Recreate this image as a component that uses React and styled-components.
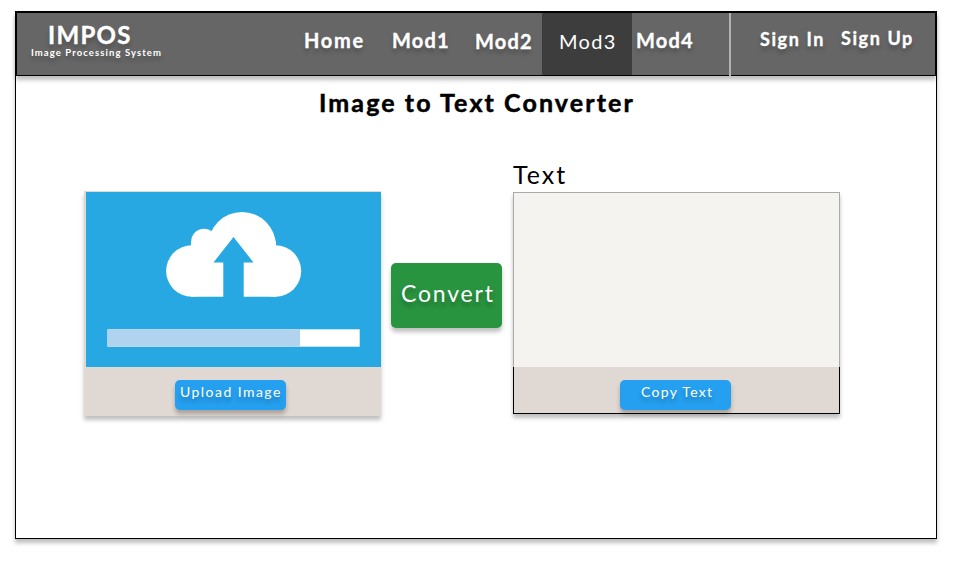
import React from "react";
import styled, { createGlobalStyle } from "styled-components";

const GlobalStyle = createGlobalStyle`
  * { box-sizing: border-box; }
  body { margin: 0; background: #fff; font-family: Lato, "Noto Sans", sans-serif; }
  h1, h2, p { margin: 0; }
`;

const raised = "0 4px 4px rgba(0, 0, 0, 0.25)";

const Page = styled.div`
  height: 581px;
  padding: 11px 0 0 15px;
`;

const Frame = styled.div`
  width: 922px;
  height: 528px;
  border: 1px solid #000;
  box-shadow: ${raised};
  display: flex;
  flex-direction: column;
`;

const Header = styled.header`
  flex: none;
  height: 64px;
  display: flex;
  background: #666;
  border: 1px solid #000;
  box-shadow: ${raised};
  color: #fff;
`;

const Brand = styled.div`
  width: 271px;
  padding-left: 14px;
  white-space: nowrap;
  text-shadow: ${raised};
  font-weight: 700;
`;

const BrandName = styled.div`
  padding: 8px 0 0 17px;
  font-size: 24px;
  line-height: 27px;
  letter-spacing: 1.3px;
  -webkit-text-stroke: 0.4px #fff;
`;

const Tagline = styled.div`
  font-size: 9.5px;
  line-height: 9px;
  padding-top: 0;
  letter-spacing: 1.08px;
`;

const NavItem = styled.a`
  width: ${(p) => p.$width}px;
  padding: ${(p) => p.$top}px 0 0 ${(p) => p.$left}px;
  font-size: ${(p) => p.$size || 20}px;
  line-height: 28px;
  font-weight: ${(p) => (p.$active ? 400 : 700)};
  letter-spacing: ${(p) => p.$spacing}px;
  background: ${(p) => (p.$active ? "#3d3d3d" : "transparent")};
  text-shadow: ${(p) => (p.$active ? "none" : raised)};
  -webkit-text-stroke: ${(p) => (p.$active ? 0 : 0.35)}px #fff;
  white-space: nowrap;
`;

const Divider = styled.div`
  width: 2px;
  height: 63px;
  background: #b3b3b3;
`;

const Title = styled.h1`
  margin: 9px 0 0 303px;
  font-size: 25px;
  line-height: 34px;
  letter-spacing: 2.1px;
  -webkit-text-stroke: 0.5px #000;
  white-space: nowrap;
`;

const Workspace = styled.main`
  display: flex;
  align-items: flex-start;
  padding: 41px 0 0 68px;
`;

const UploadPanel = styled.section`
  width: 297px;
  height: 225px;
  margin-top: 31px;
  padding: 1px 0 0 2px;
  background: #e0d8d2;
  box-shadow: ${raised};
  display: flex;
  flex-direction: column;
`;

const CloudArt = styled.svg`
  display: block;
  flex: none;
  width: 295px;
  height: 175px;
`;

const PanelFooter = styled.div`
  flex: 1;
  display: flex;
  align-items: flex-start;
  padding: 13px 0 0 ${(p) => p.$left}px;
  background: #e0d8d2;
  border: ${(p) => (p.$outlined ? "1px solid #000" : "none")};
  border-top: none;
`;

const Button = styled.button`
  width: 111px;
  height: 30px;
  padding: 0 0 7px ${(p) => p.$inset}px;
  border: none;
  border-radius: 5px;
  background: #259fef;
  box-shadow: ${raised};
  color: #fff;
  font: 400 14px/23px Lato, "Noto Sans", sans-serif;
  letter-spacing: ${(p) => p.$spacing}px;
  text-align: left;
  text-shadow: ${raised};
  white-space: nowrap;
`;

const ConvertButton = styled(Button)`
  height: 65px;
  margin: 103px 11px 0 10px;
  padding: 0 0 5px 10px;
  background: #28943f;
  font-size: 23px;
  line-height: 60px;
`;

const TextColumn = styled.section`
  width: 327px;
`;

const TextLabel = styled.h2`
  height: 32px;
  font-size: 25px;
  line-height: 28px;
  font-weight: 400;
  letter-spacing: 2px;
`;

const TextPanel = styled.div`
  height: 222px;
  display: flex;
  flex-direction: column;
  box-shadow: ${raised};
`;

const Output = styled.div`
  height: 175px;
  background: #f4f3ef;
  border: 1px solid #aaa;
  border-bottom: none;
`;

const navItems = [
  { label: "Home", $width: 90, $left: 16, $top: 13, $spacing: 1.7 },
  { label: "Mod1", $width: 84, $left: 14, $top: 13, $spacing: 1.2 },
  { label: "Mod2", $width: 80, $left: 13, $top: 14, $spacing: 1.2 },
  { label: "Mod3", $width: 90, $left: 17, $top: 14, $spacing: 1.3, $active: true },
  { label: "Mod4", $width: 97, $left: 4, $top: 13, $spacing: 1.2 },
];

const accountItems = [
  { label: "Sign In", $width: 102, $left: 29, $top: 12, $size: 18, $spacing: 1.6 },
  { label: "Sign Up", $width: 101, $left: 8, $top: 11, $size: 18, $spacing: 1.6 },
];

function UploadArt() {
  return (
    <CloudArt viewBox="0 0 295 175" aria-hidden="true">
      <rect width="295" height="175" fill="#27a8e2" />
      <g fill="#fff">
        <circle cx="105.8" cy="79" r="25.7" />
        <circle cx="189.5" cy="79" r="25.7" />
        <circle cx="156" cy="54" r="34" />
        <circle cx="118" cy="49.5" r="12.8" />
        <path d="M105 49H190V104.7H105Z" />
      </g>
      <path d="M147.5 45L167.5 70.5H157.7V106H137.3V70.5H127.5Z" fill="#27a8e2" />
      <rect x="21.5" y="137.3" width="252.2" height="17.4" fill="#fff" />
      <rect x="21.5" y="137.3" width="192.5" height="17.4" fill="#b2d3f0" />
    </CloudArt>
  );
}

export default function App() {
  return (
    <Page>
      <GlobalStyle />
      <Frame>
        <Header>
          <Brand>
            <BrandName>IMPOS</BrandName>
            <Tagline>Image Processing System</Tagline>
          </Brand>
          {navItems.map(({ label, ...style }) => (
            <NavItem key={label} {...style}>{label}</NavItem>
          ))}
          <Divider />
          {accountItems.map(({ label, ...style }) => (
            <NavItem key={label} {...style}>{label}</NavItem>
          ))}
        </Header>
        <Title>Image to Text Converter</Title>
        <Workspace>
          <UploadPanel>
            <UploadArt />
            <PanelFooter $left={89}>
              <Button $inset={5} $spacing={1.45}>Upload Image</Button>
            </PanelFooter>
          </UploadPanel>
          <ConvertButton $spacing={1.8}>Convert</ConvertButton>
          <TextColumn>
            <TextLabel>Text</TextLabel>
            <TextPanel>
              <Output />
              <PanelFooter $left={106} $outlined>
                <Button $inset={21} $spacing={1.3}>Copy Text</Button>
              </PanelFooter>
            </TextPanel>
          </TextColumn>
        </Workspace>
      </Frame>
    </Page>
  );
}
